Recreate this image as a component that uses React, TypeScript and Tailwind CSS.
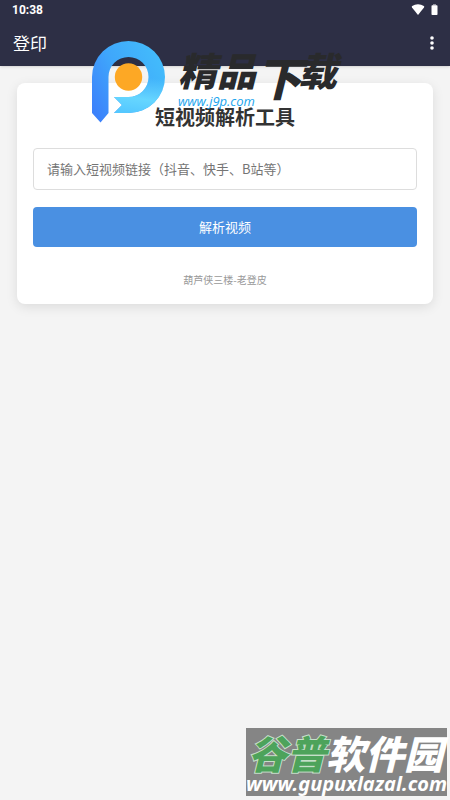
import React from "react";

function StatusBar() {
  return (
    <div className="flex h-5 items-center justify-between pl-3 pr-3">
      <span className="font-[Roboto,sans-serif] text-xs font-bold leading-4">10:38</span>
      <div className="flex items-center gap-1.5">
        <svg width="14" height="12" viewBox="0 0 14 12" fill="currentColor" aria-label="Wi-Fi">
          <path d="M7 11 1 3.5Q.3 2.5 1.2 1.9Q3.8.2 7 .2T12.800 1.900Q13.700 2.500 13 3.500Z" />
        </svg>
        <svg width="7" height="12" viewBox="0 0 7 12" aria-label="Battery">
          <path d="M2 0h3v1.500H2z" fill="#8f909c" />
          <rect x=".5" y="1.200" width="6" height="9.800" rx=".8" fill="currentColor" />
        </svg>
      </div>
    </div>
  );
}

function AppBar() {
  return (
    <div className="flex h-[46px] items-center justify-between pl-[13px] pr-3">
      <h1 className="text-[17px] leading-6">登印</h1>
      <button type="button" aria-label="More" className="flex h-8 w-3 items-center justify-center">
        <svg width="4" height="14" viewBox="0 0 4 14" fill="currentColor">
          <circle cx="2" cy="2" r="1.800" />
          <circle cx="2" cy="7" r="1.800" />
          <circle cx="2" cy="12" r="1.800" />
        </svg>
      </button>
    </div>
  );
}

function SiteLogo() {
  return (
    <div className="pointer-events-none absolute left-[92px] top-[41px] flex">
      <svg width="74" height="82" viewBox="0 0 74 82">
        <defs>
          <linearGradient id="ring" x1="0" y1=".8" x2="1" y2=".2">
            <stop offset="0" stopColor="#3c82fb" />
            <stop offset=".45" stopColor="#3fa7fb" />
            <stop offset="1" stopColor="#43bdfb" />
          </linearGradient>
          <linearGradient id="tail" x1=".6" y1="0" x2=".4" y2="1">
            <stop offset="0" stopColor="#66d6ff" stopOpacity="0" />
            <stop offset=".6" stopColor="#66d6ff" />
            <stop offset="1" stopColor="#55c8ff" />
          </linearGradient>
        </defs>
        <path
          d="M0 72V36A36.500 36 0 1 1 36.500 72H22L30 64 22 56H36.500A20 20 0 1 0 16.500 36V72L8.500 81.500Z"
          fill="url(#ring)"
        />
        <path d="M73 36A36.500 36 0 0 1 36.500 72H22L30 64 22 56H36.500A20 20 0 0 0 56.500 36Z" fill="url(#tail)" />
        <circle cx="36.500" cy="36" r="13.700" fill="#fda825" />
      </svg>
      <div className="ml-3 flex flex-col pt-2">
        <div className="flex whitespace-nowrap text-[39px] font-black italic leading-10 text-[#292a2c]">
          <span>精品</span>
          <span className="-mr-1 text-[46px] leading-[54px]">下</span>
          <span>载</span>
        </div>
        <span className="-mt-2 font-['Open_Sans','Noto_Sans',sans-serif] text-[13px] italic leading-3 text-[#1ca5ee]">
          www.j9p.com
        </span>
      </div>
    </div>
  );
}

function SourceBadge() {
  return (
    <div className="pointer-events-none absolute bottom-1 right-[3px] h-[68px] w-[201px] bg-[#858585]">
      <div className="whitespace-nowrap pl-0.5 pt-1 text-[39px] font-black italic leading-10 text-white">
        <span className="text-[#4da35b] [-webkit-text-stroke:2px_#c5dfc9] [paint-order:stroke_fill]">谷普</span>软件园
      </div>
      <div className="whitespace-nowrap font-['Noto_Sans',sans-serif] text-[20px] font-bold italic leading-6 text-white">
        www.gupuxlazal.com
      </div>
    </div>
  );
}

export default function App() {
  return (
    <div className="relative min-h-screen bg-[#f4f4f4] font-['Noto_Sans_CJK_SC',sans-serif]">
      <header className="bg-[#2d2f45] text-white shadow-sm">
        <StatusBar />
        <AppBar />
      </header>

      <main className="px-[17px] pt-[17px]">
        <section className="rounded-lg bg-white px-4 pb-4 pt-[19px] shadow-[0_3px_12px_rgba(0,0,0,0.1)]">
          <h2 className="mb-[17px] text-center text-xl font-bold leading-[29px] text-[#333]">短视频解析工具</h2>
          <form onSubmit={(e) => e.preventDefault()}>
            <input
              type="text"
              aria-label="短视频链接"
              placeholder="请输入短视频链接（抖音、快手、B站等）"
              className="block h-[42px] w-full rounded border border-[#ddd] px-[13px] pb-0.5 text-[13px] text-[#333] placeholder:text-[#757575]"
            />
            <button
              type="submit"
              className="mt-[17px] block h-10 w-full rounded bg-[#4a90e2] text-[13px] text-white"
            >
              解析视频
            </button>
          </form>
          <p className="mt-[25px] text-center text-[10px] leading-4 text-[#999]">葫芦侠三楼-老登皮</p>
        </section>
      </main>

      <SiteLogo />
      <SourceBadge />
    </div>
  );
}
